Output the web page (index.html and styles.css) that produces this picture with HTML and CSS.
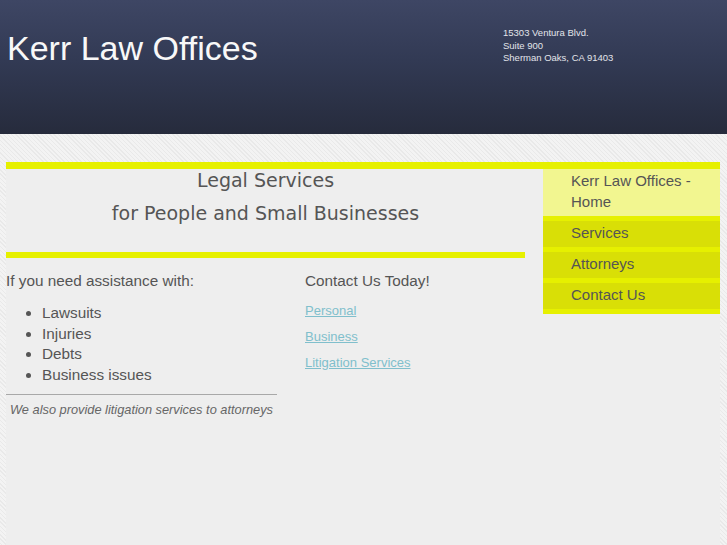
FILE: index.html
```html
<!DOCTYPE html>
<html lang="en">
<head>
    <meta charset="UTF-8">
    <meta name="viewport" content="width=device-width, initial-scale=1.0">
    <title>Kerr Law Offices</title>
    <link rel="stylesheet" href="styles.css">
</head>
<body>
    <div class="header">
        <h1 class="site-title">Kerr Law Offices</h1>
        <div class="address">
            15303 Ventura Blvd.<br>
            Suite 900<br>
            Sherman Oaks, CA 91403
        </div>
    </div>

    <div class="page">
        <div class="main">
            <div class="intro">
                <p>Legal Services</p>
                <p class="second">for People and Small Businesses</p>
            </div>
            <div class="columns">
                <div class="col-left">
                    <p class="col-title">If you need assistance with:</p>
                    <ul class="needs">
                        <li>Lawsuits</li>
                        <li>Injuries</li>
                        <li>Debts</li>
                        <li>Business issues</li>
                    </ul>
                    <p class="note">We also provide litigation services to attorneys</p>
                </div>
                <div class="col-right">
                    <p class="col-title">Contact Us Today!</p>
                    <a href="#" class="contact-link">Personal</a>
                    <a href="#" class="contact-link">Business</a>
                    <a href="#" class="contact-link">Litigation Services</a>
                </div>
            </div>
        </div>

        <ul class="side-nav">
            <li class="current"><a href="#">Kerr Law Offices - Home</a></li>
            <li><a href="#">Services</a></li>
            <li><a href="#">Attorneys</a></li>
            <li><a href="#">Contact Us</a></li>
        </ul>
    </div>
</body>
</html>
```

FILE: styles.css
```css
html {
    background-color: #eeeeee;
}
body {
    font-family: "Liberation Sans", Arial, sans-serif;
    color: #555;
    margin: 0;
    min-height: 545px;
    background: repeating-linear-gradient(45deg, #e9e9e9 0, #e9e9e9 1px, #f3f3f3 1px, #f3f3f3 3px);
}
.header {
    height: 134px;
    display: flex;
    background: linear-gradient(#3e4664 0%, #323a54 45%, #262b3c 100%);
}
.site-title {
    width: 503px;
    box-sizing: border-box;
    margin: 28px 0 0;
    padding-left: 7px;
    font-size: 34px;
    line-height: 40px;
    font-weight: normal;
    color: #f8f8f8;
}
.address {
    padding-top: 27px;
    font-size: 9.5px;
    line-height: 12.5px;
    color: #e2e4ea;
}
.page {
    display: flex;
    margin: 28px 0 0 6px;
    width: 714px;
    min-height: 383px;
    background-color: #eeeeee;
    border-top: 7px solid #e6f000;
}
.main {
    width: 519px;
    padding-right: 18px;
}
.intro {
    font-family: "DejaVu Sans", sans-serif;
    font-size: 19px;
    line-height: 22px;
    text-align: center;
    color: #555;
    padding-bottom: 28px;
    border-bottom: 6px solid #e6f000;
}
.intro p {
    margin: 0;
}
.intro .second {
    margin-top: 11px;
}
.columns {
    display: grid;
    grid-template-columns: 271px 1fr;
    column-gap: 28px;
    padding-top: 13px;
}
.col-title {
    margin: 0;
    font-size: 15.3px;
    line-height: 20px;
}
.needs {
    margin: 12px 0 8px;
    padding-left: 36px;
    font-size: 15.3px;
    line-height: 20.7px;
}
.note {
    margin: 0;
    padding: 7px 0 0 4px;
    border-top: 1px solid #a8a8a8;
    font-size: 12.8px;
    line-height: 16px;
    font-style: italic;
    white-space: nowrap;
    color: #666;
}
.col-right {
    display: flex;
    flex-direction: column;
    align-items: flex-start;
}
.col-right .col-title {
    margin-bottom: 12px;
}
.contact-link {
    font-size: 13px;
    line-height: 16px;
    margin-bottom: 10px;
    color: #80bfcc;
}
.side-nav {
    list-style: none;
    margin: 0;
    padding: 0;
    width: 177px;
    align-self: flex-start;
}
.side-nav li {
    background-color: #d9df06;
    border-bottom: 5px solid #e6f000;
}
.side-nav li.current {
    background-color: #f2f690;
}
.side-nav a {
    display: block;
    padding: 1px 10px 4px 28px;
    font-size: 15px;
    line-height: 21px;
    color: #555;
    text-decoration: none;
}
```
